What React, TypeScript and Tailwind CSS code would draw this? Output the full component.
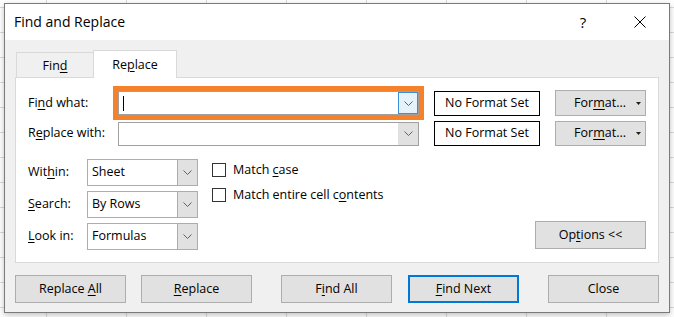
import React from 'react';

const U = ({ children }: { children: React.ReactNode }) => (
  <span className="underline underline-offset-[2px] decoration-1">{children}</span>
);

const Chevron = () => (
  <svg width="9" height="5" viewBox="0 0 9 5">
    <path d="M0.5 0.5 L4.5 4.5 L8.5 0.5" fill="none" stroke="#606060" strokeWidth="1" />
  </svg>
);

const SelectBox = ({ value }: { value: string }) => (
  <div className="flex h-[27px] w-[111px] border border-[#adadad] bg-white">
    <div className="flex flex-1 items-center pl-[4px]">{value}</div>
    <div className="flex w-[20px] items-center justify-center border-l border-[#adadad] bg-[#e1e1e1]">
      <Chevron />
    </div>
  </div>
);

const NoFormat = () => (
  <div className="flex h-[25px] w-[106px] items-center justify-center border border-black bg-white">
    No Format Set
  </div>
);

const FormatBtn = ({ h }: { h: string }) => (
  <div className={`flex ${h} w-[91px] items-center justify-end border border-[#adadad] bg-[#e1e1e1] pr-[4px]`}>
    <span>
      For<U>m</U>at...
    </span>
    <svg className="ml-[10px]" width="5" height="3" viewBox="0 0 5 3">
      <path d="M0 0 L5 0 L2.5 3 Z" fill="#202020" />
    </svg>
  </div>
);

const Btn = ({ children, primary, className = '' }: { children: React.ReactNode; primary?: boolean; className?: string }) => (
  <div
    className={`flex h-[28px] w-[111px] items-center justify-center bg-[#e1e1e1] ${
      primary ? 'border-2 border-[#0078d7]' : 'border border-[#adadad]'
    } ${className}`}
  >
    <span>{children}</span>
  </div>
);

const Check = ({ children }: { children: React.ReactNode }) => (
  <div className="flex h-[22px] items-center">
    <div className="h-[14px] w-[14px] border border-[#333333] bg-white" />
    <span className="ml-[7px]">{children}</span>
  </div>
);

export default function App() {
  return (
    <div className="h-[317px] w-[674px] overflow-hidden bg-white bg-[linear-gradient(to_right,#dadada_1px,transparent_1px),linear-gradient(to_bottom,#dadada_1px,transparent_1px)] bg-[size:80px_25px] bg-[position:46px_7px] pl-[4px] pt-[3px] font-['Open_Sans',sans-serif] text-[12.5px] leading-none text-black">
      <div className="flex h-[310px] w-[666px] flex-col border border-[#7a7a7a] bg-[#f0f0f0] shadow-[0_2px_6px_rgba(0,0,0,0.25)]">
        {/* title bar */}
        <div className="flex h-[36px] items-center bg-white pl-[9px] pr-[6px]">
          <span className="text-[14px]">Find and Replace</span>
          <div className="ml-auto flex w-[46px] justify-center text-[15px]">?</div>
          <div className="ml-[11px] flex w-[46px] justify-center">
            <svg width="12" height="12" viewBox="0 0 12 12">
              <path d="M0.5 0.5 L11.5 11.5 M11.5 0.5 L0.5 11.5" stroke="#000" strokeWidth="1" />
            </svg>
          </div>
        </div>

        {/* tabs */}
        <div className="mt-[10px] flex h-[27px] items-end pl-[11px]">
          <div className="flex h-[25px] w-[77px] items-center justify-center border-l border-t border-[#d9d9d9] pt-[2px]">
            <span>
              Fin<U>d</U>
            </span>
          </div>
          <div className="relative z-10 -mb-px flex h-[28px] w-[84px] items-center justify-center border-x border-t border-[#d9d9d9] bg-white pt-[1px]">
            <span>
              Re<U>p</U>lace
            </span>
          </div>
        </div>

        {/* panel */}
        <div className="ml-[10px] flex h-[186px] w-[644px] flex-col border border-[#d9d9d9] bg-white pl-[12px] pr-[12px]">
          <div className="mt-[8px] flex h-[34px] items-center">
            <span className="w-[85px]">
              Fi<U>n</U>d what:
            </span>
            <div className="flex h-[34px] w-[311px] border-[5px] border-[#f5822a]">
              <div className="flex flex-1 border border-[#a0a0a0] bg-white">
                <div className="flex flex-1 items-center pl-[4px]">
                  <div className="h-[15px] w-px bg-black" />
                </div>
                <div className="flex w-[20px] items-center justify-center border border-[#3c8fd9] bg-[#e5f1fb]">
                  <Chevron />
                </div>
              </div>
            </div>
            <div className="ml-[10px]">
              <NoFormat />
            </div>
            <div className="ml-[15px]">
              <FormatBtn h="h-[26px]" />
            </div>
          </div>

          <div className="mt-[1px] flex h-[25px] items-center">
            <span className="w-[90px]">
              R<U>e</U>place with:
            </span>
            <div className="flex h-[24px] w-[301px] border border-[#a0a0a0] bg-white">
              <div className="flex-1" />
              <div className="flex w-[20px] items-center justify-center bg-[#e1e1e1]">
                <Chevron />
              </div>
            </div>
            <div className="ml-[15px]">
              <NoFormat />
            </div>
            <div className="ml-[15px]">
              <FormatBtn h="h-[25px]" />
            </div>
          </div>

          <div className="mt-[13px] flex items-start">
            <div className="flex flex-col gap-[5px]">
              <div className="flex items-center">
                <span className="w-[59px]">
                  Wit<U>h</U>in:
                </span>
                <SelectBox value="Sheet" />
              </div>
              <div className="flex items-center">
                <span className="w-[59px]">
                  <U>S</U>earch:
                </span>
                <SelectBox value="By Rows" />
              </div>
              <div className="flex items-center">
                <span className="w-[59px]">
                  <U>L</U>ook in:
                </span>
                <SelectBox value="Formulas" />
              </div>
            </div>

            <div className="ml-[14px] flex flex-col gap-[3px]">
              <Check>
                Match <U>c</U>ase
              </Check>
              <Check>
                Match entire cell c<U>o</U>ntents
              </Check>
            </div>

            <Btn className="mb-[1px] ml-auto self-end">
              Op<U>t</U>ions &lt;&lt;
            </Btn>
          </div>
        </div>

        {/* bottom buttons */}
        <div className="ml-[10px] mt-[12px] flex">
          <Btn>
            Replace <U>A</U>ll
          </Btn>
          <Btn className="ml-[15px]">
            <U>R</U>eplace
          </Btn>
          <Btn className="ml-[29px]">
            F<U>i</U>nd All
          </Btn>
          <Btn primary className="ml-[16px]">
            <U>F</U>ind Next
          </Btn>
          <Btn className="ml-[29px]">Close</Btn>
        </div>
      </div>
    </div>
  );
}
